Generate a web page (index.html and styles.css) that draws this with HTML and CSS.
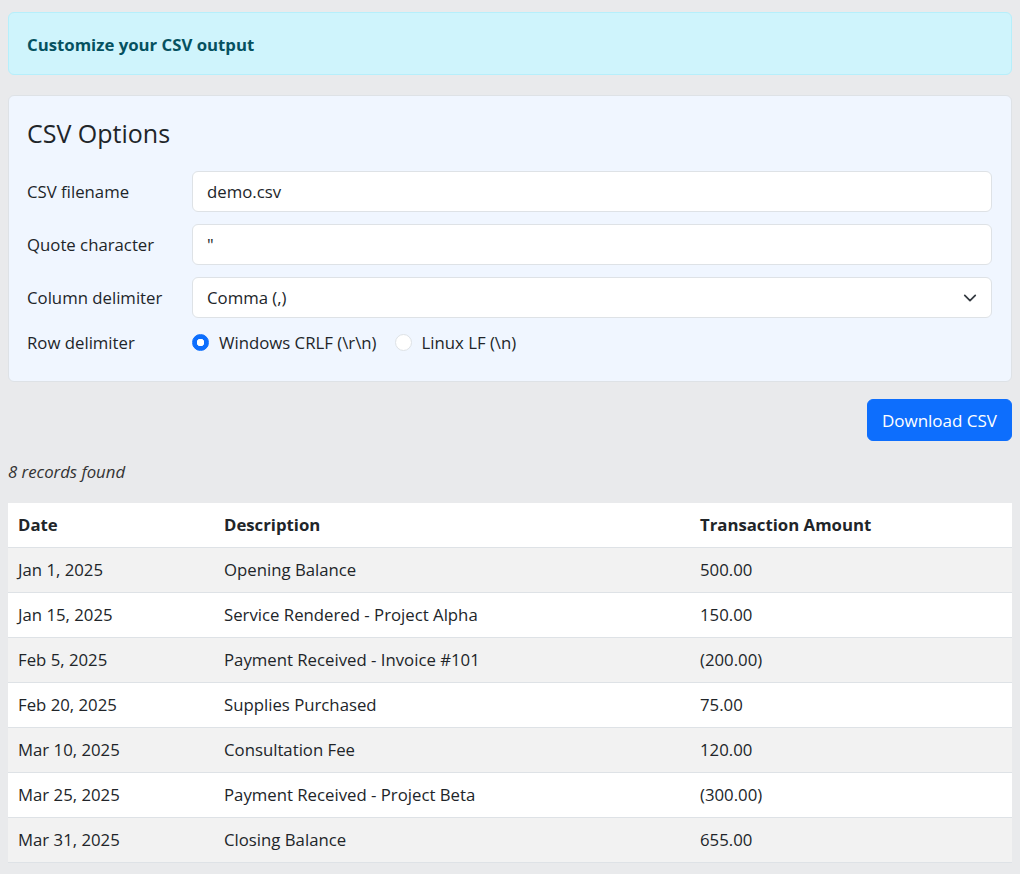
FILE: index.html
```html
<!DOCTYPE html>
<html lang="en">
<head>
<meta charset="utf-8">
<title>CSV Export</title>
<link rel="stylesheet" href="styles.css">
</head>
<body>
<div class="page">
  <div class="alert">Customize your CSV output</div>

  <div class="card">
    <h2 class="card-title">CSV Options</h2>
    <div class="form-row">
      <label class="label">CSV filename</label>
      <div class="control"><div class="input">demo.csv</div></div>
    </div>
    <div class="form-row">
      <label class="label">Quote character</label>
      <div class="control"><div class="input">"</div></div>
    </div>
    <div class="form-row">
      <label class="label">Column delimiter</label>
      <div class="control">
        <div class="input select">
          <span>Comma (,)</span>
          <svg class="chevron" width="16" height="16" viewBox="0 0 16 16"><path d="M2 5l6 6 6-6" fill="none" stroke="#343a40" stroke-width="2" stroke-linecap="round" stroke-linejoin="round"/></svg>
        </div>
      </div>
    </div>
    <div class="form-row radio-row">
      <label class="label">Row delimiter</label>
      <div class="control radios">
        <span class="radio-item"><span class="radio checked"></span>Windows CRLF (\r\n)</span>
        <span class="radio-item"><span class="radio"></span>Linux LF (\n)</span>
      </div>
    </div>
  </div>

  <div class="actions">
    <button class="btn">Download CSV</button>
  </div>

  <p class="count">8 records found</p>

  <table class="table">
    <thead>
      <tr><th class="c1">Date</th><th class="c2">Description</th><th class="c3">Transaction Amount</th></tr>
    </thead>
    <tbody>
      <tr><td>Jan 1, 2025</td><td>Opening Balance</td><td>500.00</td></tr>
      <tr><td>Jan 15, 2025</td><td>Service Rendered - Project Alpha</td><td>150.00</td></tr>
      <tr><td>Feb 5, 2025</td><td>Payment Received - Invoice #101</td><td>(200.00)</td></tr>
      <tr><td>Feb 20, 2025</td><td>Supplies Purchased</td><td>75.00</td></tr>
      <tr><td>Mar 10, 2025</td><td>Consultation Fee</td><td>120.00</td></tr>
      <tr><td>Mar 25, 2025</td><td>Payment Received - Project Beta</td><td>(300.00)</td></tr>
      <tr><td>Mar 31, 2025</td><td>Closing Balance</td><td>655.00</td></tr>
    </tbody>
  </table>
</div>
</body>
</html>
```
FILE: styles.css
```css
* { box-sizing: border-box; }
html, body {
  margin: 0;
  background: #e9eaec;
}
body {
  font-family: "Segoe UI", "Open Sans", "Noto Sans", sans-serif;
  font-size: 16.75px;
  color: #212529;
}
.page {
  padding: 12px 8px 12px 8px;
}
.alert {
  background: #cff4fc;
  border: 1px solid #b6effb;
  border-radius: 6px;
  color: #055160;
  font-weight: 700;
  padding: 20px 18px 0;
  line-height: 24px;
  height: 63px;
}
.card {
  margin-top: 20px;
  background: #f0f6ff;
  border: 1px solid #dee2e6;
  border-radius: 6px;
  padding: 19px 19px 23px 18px;
}
.card-title {
  margin: 0 0 20px;
  font-size: 25px;
  font-weight: 400;
  line-height: 36px;
}
.form-row {
  display: flex;
  align-items: center;
  margin-bottom: 12px;
}
.radio-row { margin-bottom: 0; margin-top: -4px; }
.label {
  width: 165px;
  flex: none;
}
.control { flex: 1; }
.input {
  height: 41px;
  background: #fff;
  border: 1px solid #dee2e6;
  border-radius: 6px;
  padding: 0 14px;
  display: flex;
  align-items: center;
}
.select { justify-content: space-between; padding-right: 14px; }
.chevron { width: 14px; height: 14px; }
.radios { display: flex; align-items: center; gap: 18px; height: 32px; }
.radio-item { display: inline-flex; align-items: center; gap: 10px; }
.radio {
  width: 17px;
  height: 17px;
  border-radius: 50%;
  background: #fff;
  border: 1px solid #dee2e6;
  display: inline-block;
}
.radio.checked {
  border-color: #0d6efd;
  background: radial-gradient(circle, #fff 0 3.5px, #0d6efd 4px);
}
.actions {
  display: flex;
  justify-content: flex-end;
  margin-top: 17px;
}
.btn {
  font-family: inherit;
  font-size: 17px;
  color: #fff;
  background: #0d6efd;
  border: 1px solid #0d6efd;
  border-radius: 6px;
  height: 42px;
  padding: 0 14px;
}
.count {
  font-style: italic;
  color: #333;
  margin: 19px 0 19px;
  line-height: 24px;
}
.table {
  width: 100%;
  border-collapse: collapse;
  background: #fff;
}
.table th, .table td {
  text-align: left;
  padding: 10px 10px;
  border-bottom: 1px solid #dee2e6;
  line-height: 24px;
}
.table th { font-weight: 700; }
.table tbody tr:nth-child(odd) { background: #f2f2f2; }
.c1 { width: 206px; }
.c2 { width: 476px; }
```
